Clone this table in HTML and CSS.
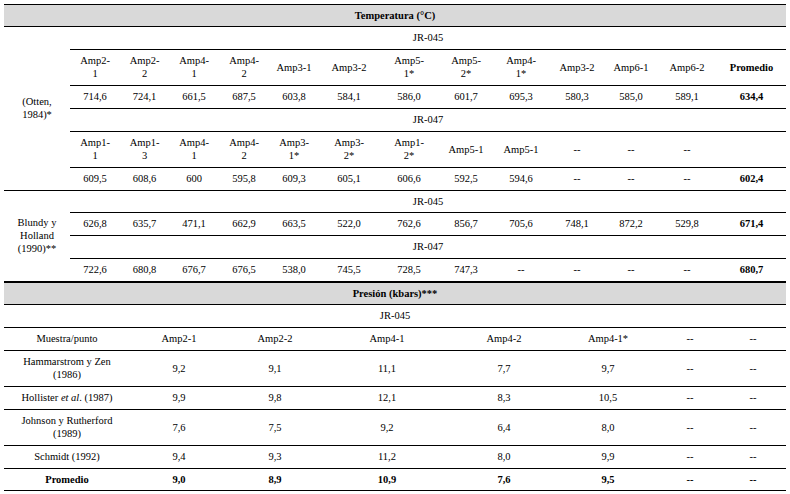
FILE: index.html
```html
<!DOCTYPE html>
<html lang="es">
<head>
<meta charset="utf-8">
<title>Temperatura y presión</title>
<link rel="stylesheet" href="styles.css">
</head>
<body>
<div class="wrap">
<table class="tbl temp">
  <colgroup>
    <col class="c-label">
    <col style="width:50px"><col style="width:49px"><col style="width:50px"><col style="width:50px">
    <col style="width:50px"><col style="width:60px"><col style="width:60px"><col style="width:54px">
    <col style="width:56px"><col style="width:56px"><col style="width:52px"><col style="width:60px">
    <col style="width:69px">
  </colgroup>
  <tr class="sec"><td colspan="14" class="b">Temperatura (°C)</td></tr>
  <tr>
    <td rowspan="6" class="label">(Otten,<br>1984)*</td>
    <td colspan="13">JR-045</td>
  </tr>
  <tr class="two">
    <td>Amp2-<br>1</td><td>Amp2-<br>2</td><td>Amp4-<br>1</td><td>Amp4-<br>2</td>
    <td>Amp3-1</td><td>Amp3-2</td><td>Amp5-<br>1*</td><td>Amp5-<br>2*</td>
    <td>Amp4-<br>1*</td><td>Amp3-2</td><td>Amp6-1</td><td>Amp6-2</td><td class="b">Promedio</td>
  </tr>
  <tr>
    <td>714,6</td><td>724,1</td><td>661,5</td><td>687,5</td><td>603,8</td><td>584,1</td><td>586,0</td>
    <td>601,7</td><td>695,3</td><td>580,3</td><td>585,0</td><td>589,1</td><td class="b">634,4</td>
  </tr>
  <tr><td colspan="13">JR-047</td></tr>
  <tr class="two">
    <td>Amp1-<br>1</td><td>Amp1-<br>3</td><td>Amp4-<br>1</td><td>Amp4-<br>2</td>
    <td>Amp3-<br>1*</td><td>Amp3-<br>2*</td><td>Amp1-<br>2*</td><td>Amp5-1</td>
    <td>Amp5-1</td><td>--</td><td>--</td><td>--</td><td></td>
  </tr>
  <tr>
    <td>609,5</td><td>608,6</td><td>600</td><td>595,8</td><td>609,3</td><td>605,1</td><td>606,6</td>
    <td>592,5</td><td>594,6</td><td>--</td><td>--</td><td>--</td><td class="b">602,4</td>
  </tr>
  <tr>
    <td rowspan="4" class="label">Blundy y<br>Holland<br>(1990)**</td>
    <td colspan="13" class="tight">JR-045</td>
  </tr>
  <tr>
    <td>626,8</td><td>635,7</td><td>471,1</td><td>662,9</td><td>663,5</td><td>522,0</td><td>762,6</td>
    <td>856,7</td><td>705,6</td><td>748,1</td><td>872,2</td><td>529,8</td><td class="b">671,4</td>
  </tr>
  <tr><td colspan="13">JR-047</td></tr>
  <tr>
    <td>722,6</td><td>680,8</td><td>676,7</td><td>676,5</td><td>538,0</td><td>745,5</td><td>728,5</td>
    <td>747,3</td><td>--</td><td>--</td><td>--</td><td>--</td><td class="b">680,7</td>
  </tr>
</table>

<table class="tbl pres">
  <colgroup>
    <col style="width:126px"><col style="width:98px"><col style="width:94px"><col style="width:130px">
    <col style="width:104px"><col style="width:104px"><col style="width:60px"><col style="width:66px">
  </colgroup>
  <tr class="sec"><td colspan="8" class="b">Presión (kbars)***</td></tr>
  <tr><td colspan="8">JR-045</td></tr>
  <tr>
    <td>Muestra/punto</td><td>Amp2-1</td><td>Amp2-2</td><td>Amp4-1</td><td>Amp4-2</td><td>Amp4-1*</td><td>--</td><td>--</td>
  </tr>
  <tr class="two">
    <td>Hammarstrom y Zen<br>(1986)</td><td>9,2</td><td>9,1</td><td>11,1</td><td>7,7</td><td>9,7</td><td>--</td><td>--</td>
  </tr>
  <tr>
    <td>Hollister <i>et al</i>. (1987)</td><td>9,9</td><td>9,8</td><td>12,1</td><td>8,3</td><td>10,5</td><td>--</td><td>--</td>
  </tr>
  <tr class="two">
    <td>Johnson y Rutherford<br>(1989)</td><td>7,6</td><td>7,5</td><td>9,2</td><td>6,4</td><td>8,0</td><td>--</td><td>--</td>
  </tr>
  <tr>
    <td>Schmidt (1992)</td><td>9,4</td><td>9,3</td><td>11,2</td><td>8,0</td><td>9,9</td><td>--</td><td>--</td>
  </tr>
  <tr class="b last">
    <td>Promedio</td><td>9,0</td><td>8,9</td><td>10,9</td><td>7,6</td><td>9,5</td><td>--</td><td>--</td>
  </tr>
</table>
</div>
</body>
</html>
```

FILE: styles.css
```css
html, body {
  margin: 0;
  padding: 0;
  background: #ffffff;
}

body {
  font-family: "Liberation Serif", "Times New Roman", serif;
  font-size: 10.5px;
  color: #000000;
}

.wrap {
  padding: 4px 4px 0 4px;
  width: 782px;
}

.tbl {
  width: 782px;
  border-collapse: collapse;
  table-layout: fixed;
}

.tbl td {
  padding: 4px 1px 5px 1px;
  line-height: 13px;
  text-align: center;
  vertical-align: middle;
  border-bottom: 1px solid #000000;
}

.c-label {
  width: 66px;
}

.tbl .sec td {
  background: #d9d9d9;
  border-top: 1px solid #000000;
  padding-bottom: 4px;
}

.tbl td.tight {
  padding-bottom: 4px;
}

.pres .last td {
  padding-bottom: 4px;
}

.b {
  font-weight: bold;
}

.label {
  text-align: center;
}
```
